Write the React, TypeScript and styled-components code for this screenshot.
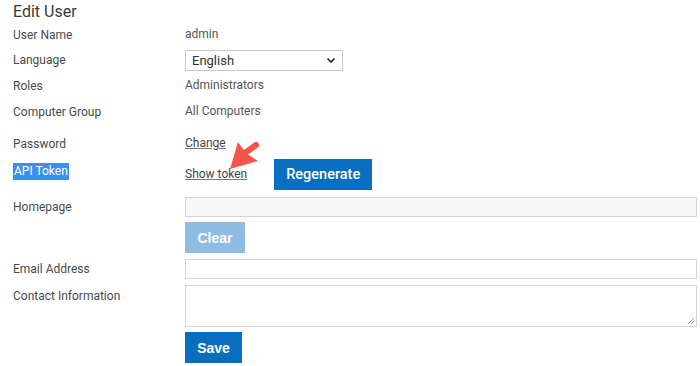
import React from 'react';
import styled, { createGlobalStyle } from 'styled-components';

const Global = createGlobalStyle`
body {
  margin: 0;
  background: #ffffff;
  font-family: Roboto, "Liberation Sans", Arial, sans-serif;
}
`;

const Page = styled.div`
position: relative;
width: 700px;
height: 366px;
box-sizing: border-box;
padding: 0 3px 0 13px;
overflow: hidden;
`;

const Title = styled.div`
font-size: 16px;
line-height: 22px;
padding-top: 1px;
color: #3a3a3a;
`;

const Row = styled.div<{ $h: number; $top?: number; $align?: string }>`
display: grid;
grid-template-columns: 172px 1fr;
align-items: ${(p) => p.$align || 'center'};
height: ${(p) => p.$h}px;
margin-top: ${(p) => p.$top || 0}px;
`;

const Label = styled.div<{ $pad?: number; $start?: boolean }>`
font-size: 12px;
line-height: 20px;
color: #4a4a4a;
padding-top: ${(p) => p.$pad || 0}px;
align-self: ${(p) => (p.$start ? 'start' : 'auto')};
`;

const Selected = styled.span`
background: #3d8ef2;
color: #fff;
padding: 0 1px;
line-height: 17px;
display: inline-block;
`;

const Value = styled.div`
font-size: 12px;
line-height: 20px;
color: #555;
margin-top: -2px;
`;

const Link = styled.a`
font-size: 12px;
color: #444;
text-decoration: underline;
text-decoration-color: #777;
cursor: pointer;
`;

const SelectBox = styled.div`
width: 158px;
height: 21px;
box-sizing: border-box;
border: 1px solid #c9c9c9;
display: flex;
align-items: center;
justify-content: space-between;
padding: 0 6px;
font-size: 13px;
color: #333;
`;

const Inline = styled.div`
display: flex;
align-items: center;
gap: 27px;
`;

const Button = styled.button<{ $w: number; $light?: boolean }>`
width: ${(p) => p.$w}px;
height: 31px;
border: none;
background: ${(p) => (p.$light ? '#8fbce2' : '#0a6ebe')};
color: #fff;
font-family: "Liberation Sans", Arial, sans-serif;
font-weight: bold;
font-size: 14px;
padding: 0;
`;

const RegenButton = styled(Button)`
font-family: Roboto, "Liberation Sans", sans-serif;
font-weight: 500;
font-size: 14.5px;
`;

const Input = styled.div<{ $bg?: string }>`
height: 20px;
box-sizing: border-box;
border: 1px solid #d4d4d4;
background: ${(p) => p.$bg || '#fff'};
`;

const TextArea = styled.div`
position: relative;
height: 42px;
box-sizing: border-box;
border: 1px solid #d4d4d4;
background: #fff;
`;

const Grip = styled.svg`
position: absolute;
right: 1px;
bottom: 1px;
`;

const Arrow = styled.svg`
position: absolute;
left: 0;
top: 0;
pointer-events: none;
`;

const Offset = styled.div`
grid-column: 2;
`;

function App() {
  return (
    <Page>
      <Global />
      <Title>Edit User</Title>
      <Row $h={24}>
        <Label>User Name</Label>
        <Value>admin</Value>
      </Row>
      <Row $h={26}>
        <Label>Language</Label>
        <SelectBox>
          English
          <svg width="10" height="7" viewBox="0 0 10 7">
            <path d="M1.5 1.5 L5 5 L8.5 1.5" fill="none" stroke="#222" strokeWidth="1.6" />
          </svg>
        </SelectBox>
      </Row>
      <Row $h={26}>
        <Label>Roles</Label>
        <Value>Administrators</Value>
      </Row>
      <Row $h={26}>
        <Label>Computer Group</Label>
        <Value>All Computers</Value>
      </Row>
      <Row $h={26} $top={6}>
        <Label>Password</Label>
        <Value>
          <Link>Change</Link>
        </Value>
      </Row>
      <Row $h={34}>
        <Label $start $pad={4}>
          <Selected>API Token</Selected>
        </Label>
        <Inline>
          <Link>Show token</Link>
          <RegenButton $w={98}>Regenerate</RegenButton>
        </Inline>
      </Row>
      <Row $h={20} $top={6}>
        <Label>Homepage</Label>
        <Input $bg="#f8f8f8" />
      </Row>
      <Row $h={31} $top={5}>
        <Offset>
          <Button $w={60} $light>
            Clear
          </Button>
        </Offset>
      </Row>
      <Row $h={20} $top={6}>
        <Label>Email Address</Label>
        <Input />
      </Row>
      <Row $h={42} $top={6} $align="start">
        <Label $pad={1}>Contact Information</Label>
        <TextArea>
          <Grip width="8" height="8" viewBox="0 0 8 8">
            <path d="M7 1 L1 7 M7 4 L4 7" stroke="#999" strokeWidth="1" />
          </Grip>
        </TextArea>
      </Row>
      <Row $h={31} $top={5}>
        <Offset>
          <Button $w={57}>Save</Button>
        </Offset>
      </Row>
      <Arrow width="700" height="366" viewBox="0 0 700 366">
        <line x1="245" y1="153" x2="256" y2="145" stroke="#f4574a" strokeWidth="6" strokeLinecap="round" />
        <polygon points="230,169 238,142 246,153 258,161" fill="#f4574a" />
      </Arrow>
    </Page>
  );
}

export default App;
